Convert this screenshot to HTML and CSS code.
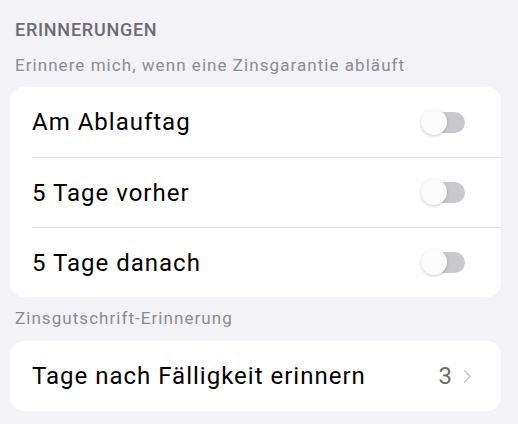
FILE: index.html
```html
<!DOCTYPE html>
<html lang="de">
<head>
<meta charset="utf-8">
<title>Erinnerungen</title>
<link rel="stylesheet" href="styles.css">
</head>
<body>
<main class="page">
  <h2 class="section-title">ERINNERUNGEN</h2>
  <p class="section-note">Erinnere mich, wenn eine Zinsgarantie abläuft</p>
  <div class="card">
    <div class="row">
      <span class="row-label">Am Ablauftag</span>
      <span class="switch"><span class="knob"></span></span>
    </div>
    <div class="row">
      <span class="row-label">5 Tage vorher</span>
      <span class="switch"><span class="knob"></span></span>
    </div>
    <div class="row">
      <span class="row-label">5 Tage danach</span>
      <span class="switch"><span class="knob"></span></span>
    </div>
  </div>
  <p class="section-note second">Zinsgutschrift-Erinnerung</p>
  <div class="card">
    <div class="row">
      <span class="row-label">Tage nach Fälligkeit erinnern</span>
      <span class="row-value">3
        <svg class="chevron" width="9" height="15" viewBox="0 0 9 15"><path d="M1.5 1.5 L7 7.5 L1.5 13.5" fill="none" stroke="#c4c4c8" stroke-width="1.4" stroke-linecap="round" stroke-linejoin="round"/></svg>
      </span>
    </div>
  </div>
</main>
</body>
</html>
```
FILE: styles.css
```css
html, body {
  margin: 0;
  padding: 0;
  background: #f2f2f7;
}
body {
  font-family: Roboto, "Noto Sans", "Liberation Sans", sans-serif;
  color: #000;
}
.page {
  padding: 19px 17px 0 10px;
}
.section-title {
  margin: 0 0 0 5px;
  font-size: 18px;
  font-weight: 500;
  letter-spacing: 0.75px;
  color: #6c6c71;
  line-height: 22px;
}
.section-note {
  margin: 13px 0 11px 5px;
  font-size: 17px;
  letter-spacing: 1.05px;
  color: #8c8c91;
  line-height: 22px;
}
.section-note.second {
  margin-top: 10px;
  margin-bottom: 12px;
}
.card {
  background: #fff;
  border-radius: 14px;
  overflow: hidden;
}
.row {
  height: 70px;
  display: flex;
  align-items: center;
  justify-content: space-between;
  margin-left: 22px;
  padding-right: 36px;
  box-sizing: border-box;
}
.row + .row {
  border-top: 1px solid #e3e3e6;
}
.row-label {
  font-size: 24px;
  letter-spacing: 1px;
}
.switch {
  position: relative;
  width: 42px;
  height: 21px;
  border-radius: 11px;
  background: #c9c9cd;
}
.knob {
  position: absolute;
  left: -2px;
  top: -3px;
  width: 26px;
  height: 26px;
  border-radius: 50%;
  background: #fbfbfb;
  box-shadow: 0 1px 3px rgba(0,0,0,0.22);
}
.row-value {
  display: flex;
  align-items: center;
  gap: 11px;
  font-size: 24px;
  color: #6c6c71;
  margin-right: -7px;
}
.chevron {
  display: block;
}
```
